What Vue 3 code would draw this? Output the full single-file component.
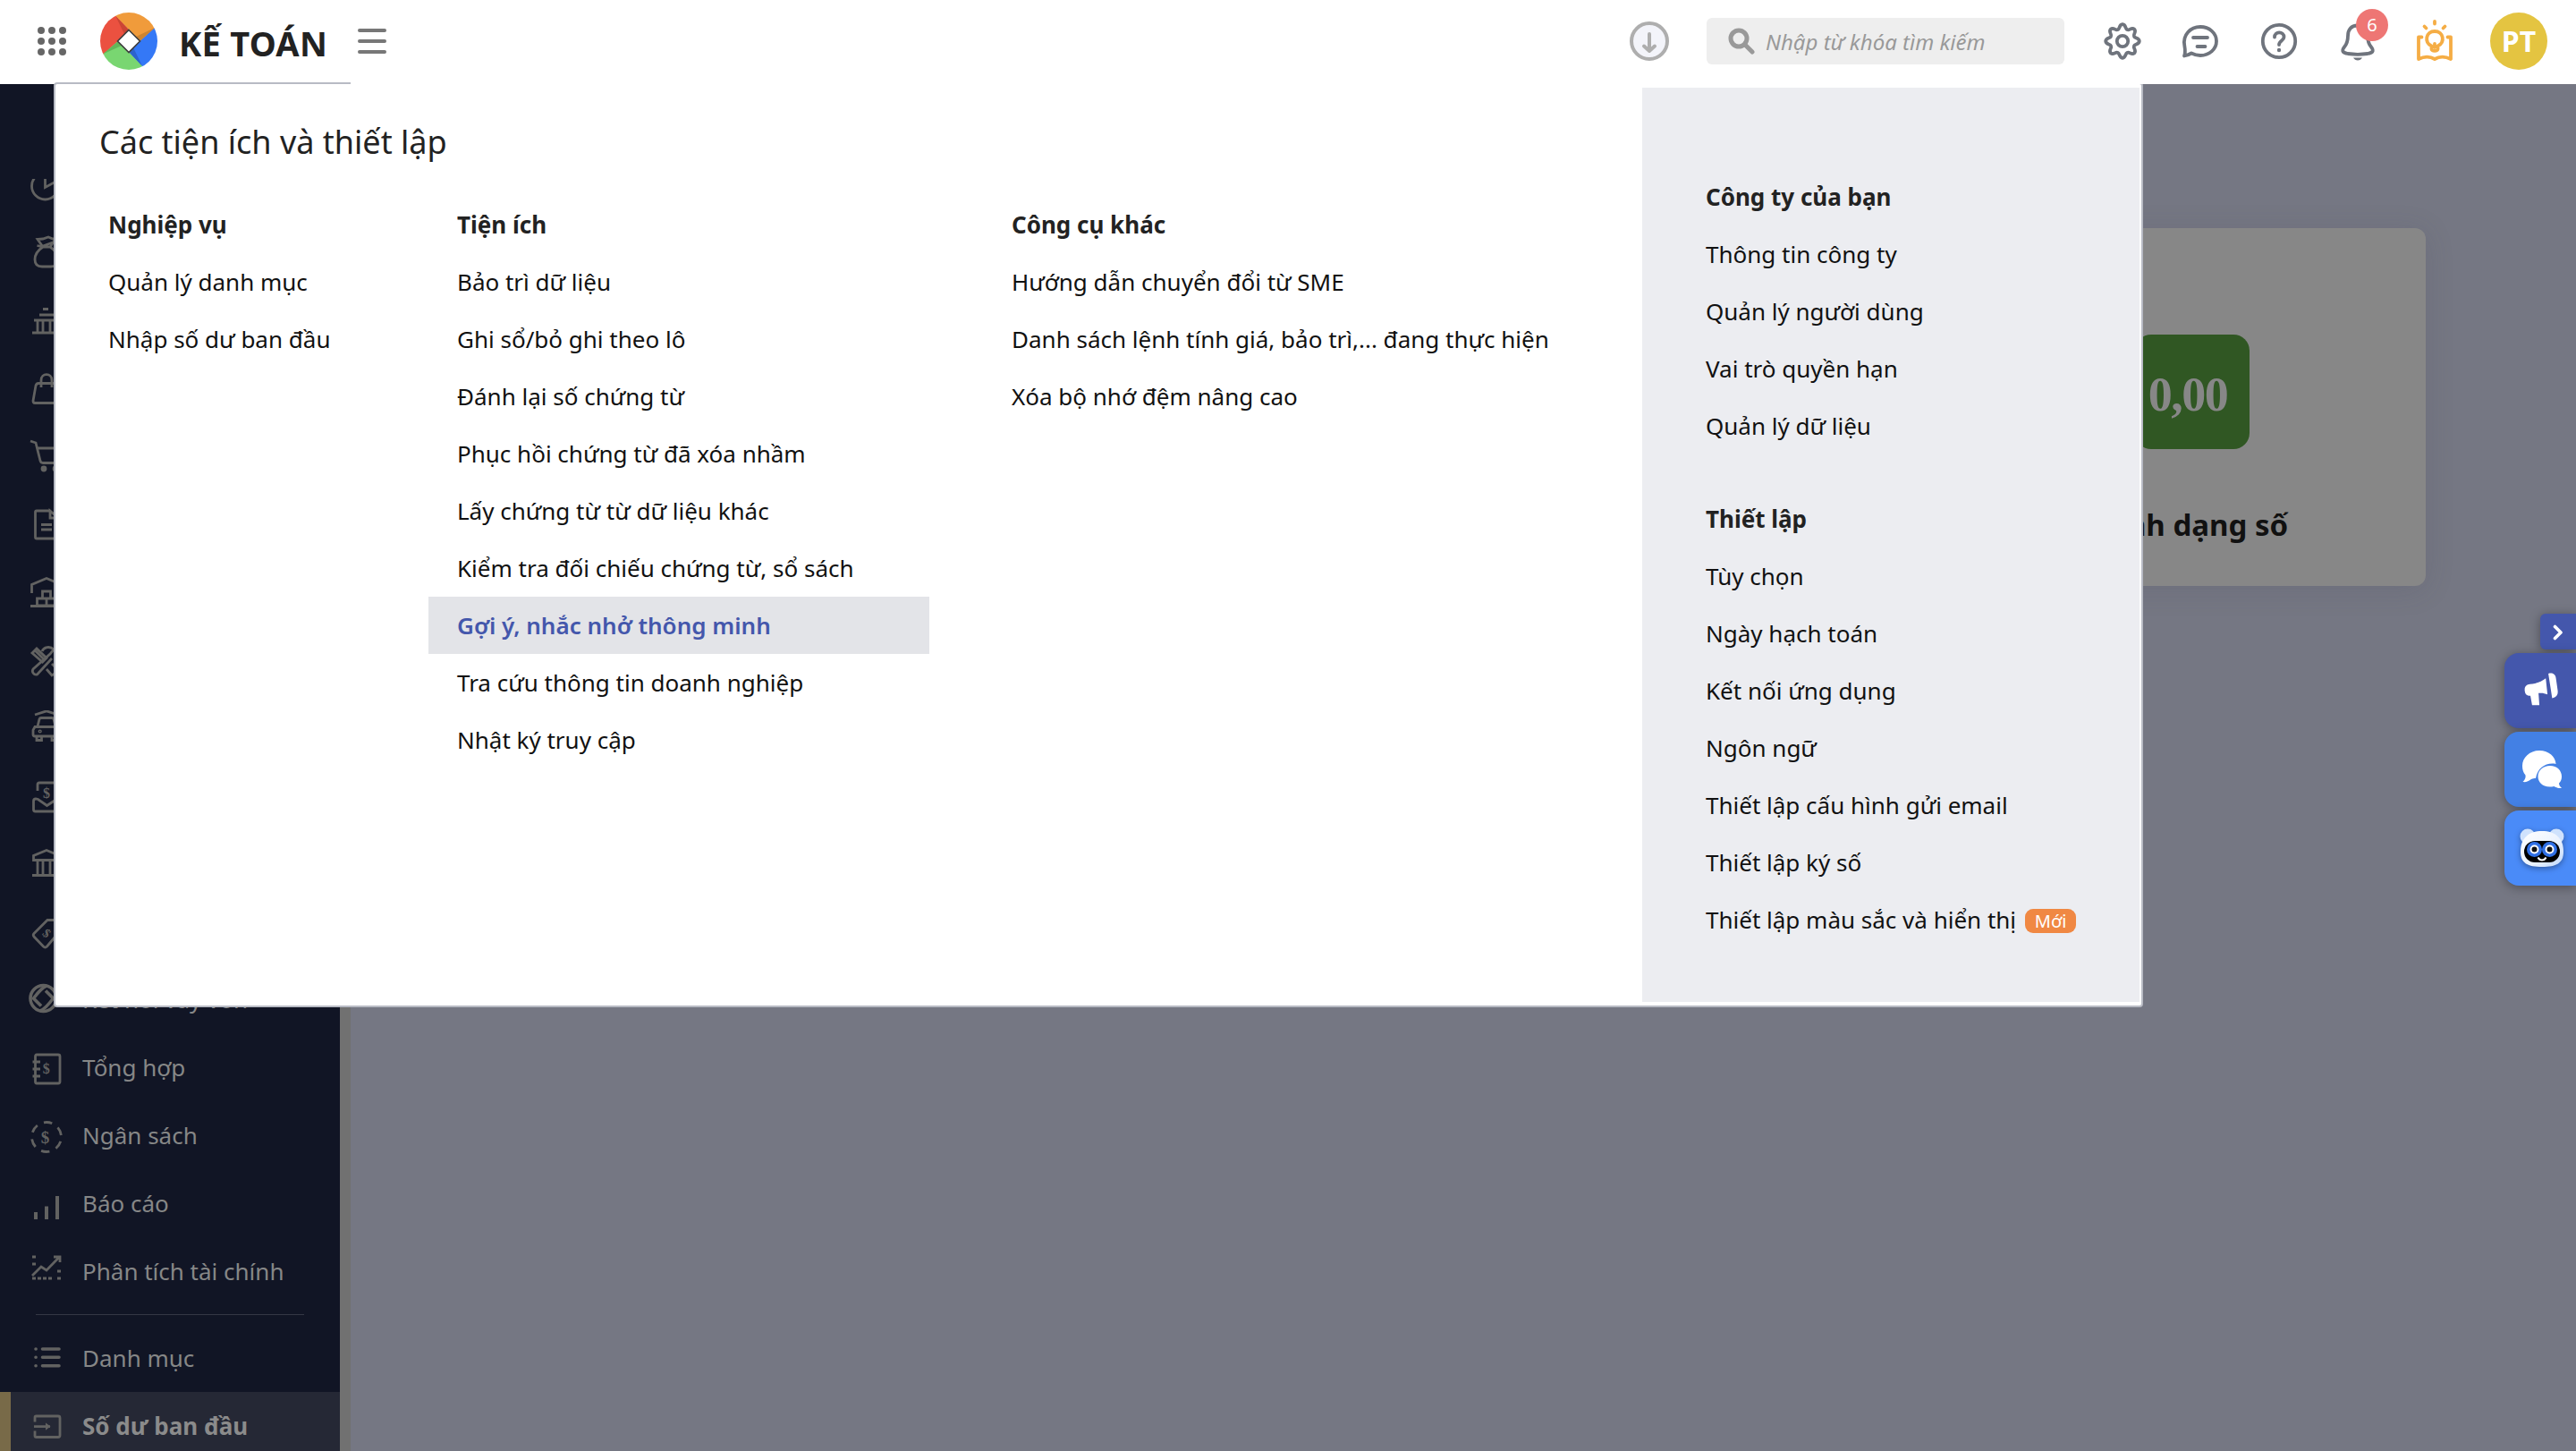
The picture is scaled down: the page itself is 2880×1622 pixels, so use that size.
<template>
  <div class="app">
    <header class="header">
      <div class="brand">
        <svg class="apps" viewBox="0 0 32 32">
          <circle v-for="n in 9" :key="n" :cx="4 + ((n - 1) % 3) * 12" :cy="4 + Math.floor((n - 1) / 3) * 12" r="4" />
        </svg>
        <svg class="logo" viewBox="0 0 64 64">
          <clipPath id="logo-clip"><circle cx="32" cy="32" r="32" /></clipPath>
          <g clip-path="url(#logo-clip)">
            <path fill="#eb5140" d="M-4 -4H10L32 19L20 32L-4 54Z" />
            <path fill="#f09b3b" d="M10 -5H70V10L44 32L32 19L13.500 0Z" />
            <path fill="#3478f6" d="M70 9L44 32L32 44L53 67H70Z" />
            <path fill="#79d671" d="M-4 53L20 32L32 44L54 67H-4Z" />
            <path fill="#cb4534" d="M17 3.500L32 19L27 24Z" />
            <path fill="#cd8430" d="M61 17L44.500 32L40 27Z" />
            <path fill="#2b63cc" d="M47 60L32 44L37 39Z" />
            <path fill="#62b65a" d="M3 46.500L20 32L24 37Z" />
          </g>
          <path fill="#fff" stroke="#3c3c3c" stroke-width="1.600" d="M32 19.500L44.500 32L32 44.500L19.500 32Z" />
        </svg>
        <span class="brand-name">KẾ TOÁN</span>
      </div>
      <div class="header-main">
        <svg class="burger" viewBox="0 0 32 28">
          <path d="M2 2H30M2 14H30M2 26H30" />
        </svg>
        <div class="tools">
          <svg class="download" viewBox="0 0 44 44">
            <circle cx="22" cy="22" r="20" />
            <path d="M22 14V33M16 27.500L22 33L28 27.500" />
          </svg>
          <div class="search">
            <svg class="search-icon" viewBox="0 0 30 30">
              <circle cx="12" cy="12" r="9" />
              <path d="M19 19L27 27" />
            </svg>
            <span class="placeholder">Nhập từ khóa tìm kiếm</span>
          </div>
          <svg class="tool gear" viewBox="0 0 44 44">
            <path :d="gearPath" />
            <circle cx="22" cy="22" r="6.200" />
          </svg>
          <svg class="tool" viewBox="0 0 44 44">
            <path d="M4 38.500C5.500 35 5 31 4.300 27C2 15 11 6 22 6C32 6 40 13 40 22C40 31 32 38 22 38C18 38 15 37 12 35.500C9.500 37 7 38 4 38.500Z" />
            <path d="M14 18H30M18.500 28H27.500" />
          </svg>
          <svg class="tool" viewBox="0 0 44 44">
            <circle cx="22" cy="22" r="18.200" />
            <path d="M17 17.500C17 10.500 27.500 11 27.500 17.500C27.500 21.500 22 21.500 22 26" />
            <circle class="solid" cx="22" cy="32" r="2.200" />
          </svg>
          <div class="bell">
            <svg class="tool" viewBox="0 0 44 44">
              <path d="M22 4.500C14 4.500 11 10 11 16C11 22 10 25 7 28.500C3 33.500 6 35 11 36C18 37 26 37 33 36C38 35 41 33.500 37 28.500C34 25 33 22 33 16C33 10 30 4.500 22 4.500Z" />
              <path class="solid" d="M17 40.500H27C25 44.500 19 44.500 17 40.500Z" />
            </svg>
            <span class="count">6</span>
          </div>
          <svg class="tool guide" viewBox="0 0 44 48">
            <path d="M7.500 19.500H4V44C10 41 17 41 22 44C27 41 34 41 40 44V19.500H36.500" />
            <path d="M18.500 33V29.500C10 25 12 13 22 13C32 13 34 25 25.500 29.500V33C25 35.500 19 35.500 18.500 33ZM22 27V31" />
            <path d="M22 2V4.500M10.500 7.500L12.500 9.500M33.500 7.500L31.500 9.500" />
          </svg>
          <div class="avatar">PT</div>
        </div>
      </div>
    </header>

    <div class="body">
      <aside class="sidebar">
        <ul class="nav">
          <li v-for="(item, i) in navItems" :key="i" class="nav-item">
            <svg class="nav-icon" viewBox="0 0 40 40" v-html="item.icon"></svg>
            <span class="nav-label">{{ item.label }}</span>
          </li>
          <li class="divider"></li>
          <li
            v-for="item in footItems"
            :key="item.label"
            :class="['nav-item', { active: item.active }]"
          >
            <svg class="nav-icon" viewBox="0 0 40 40" v-html="item.icon"></svg>
            <span>{{ item.label }}</span>
          </li>
        </ul>
      </aside>
      <main class="content">
        <div class="card">
          <div class="tile">0,00</div>
          <div class="card-title">Định dạng số</div>
        </div>
      </main>
    </div>

    <section class="panel">
      <div class="panel-main">
        <h2 class="panel-title">Các tiện ích và thiết lập</h2>
        <div class="columns">
          <ul v-for="group in groups" :key="group.title" :class="['menu', group.name]">
            <li class="menu-title">{{ group.title }}</li>
            <li
              v-for="item in group.items"
              :key="item"
              :class="['menu-item', { selected: item === selected }]"
              @click="selected = item"
            >
              {{ item }}
            </li>
          </ul>
        </div>
      </div>
      <div class="panel-side">
        <ul v-for="group in sideGroups" :key="group.title" class="menu">
          <li class="menu-title">{{ group.title }}</li>
          <li v-for="item in group.items" :key="item" class="menu-item" @click="selected = item">
            {{ item }}<span v-if="item === newItem" class="new">Mới</span>
          </li>
        </ul>
      </div>
    </section>

    <div class="floats">
      <button class="float-toggle">
        <svg viewBox="0 0 12 18"><path d="M2.500 2.500L9 9L2.500 15.500" /></svg>
      </button>
      <button class="float-btn news">
        <svg viewBox="0 0 44 44">
          <path d="M4 23C3 17 6 15 10 14.500C17 14 24 11 28.500 7.500L30.500 26.500C27 25 24 24.500 20 25L21 39H12.500L10.500 28C6 28 4.500 26 4 23Z" />
          <path d="M31.500 2C37 .5 40 3 40.500 8L42.500 22C43 27 41 30 36 31Z" />
        </svg>
      </button>
      <button class="float-btn chat">
        <svg viewBox="0 0 44 44">
          <path d="M20 1C31 1 38 8 38.500 16C28 14 18 20 16 32C14 32 13 32 11 33C8 35.500 5 36.500 1.500 36C4 33.500 5 31 4.500 28.500C2 25.500 1 22 1 18C1 9 9 1 20 1Z" />
          <path d="M32 18C40 18 45 23.500 45 30C45 33 44 35.500 42 37.500C42 40 43.500 41.500 45 43C41 43.500 38 42 36.500 41C25 43.500 18.500 37 18.500 30C18.500 23 24 18 32 18Z" />
        </svg>
      </button>
      <button class="float-btn bot">
        <svg viewBox="0 0 50 44">
          <defs>
            <linearGradient id="fur" x1="0" y1="0" x2="1" y2="1">
              <stop offset="0" stop-color="#fff" />
              <stop offset=".6" stop-color="#eaf2fe" />
              <stop offset="1" stop-color="#bcd6fb" />
            </linearGradient>
          </defs>
          <circle cx="9" cy="9" r="8.500" fill="#cfe2fd" />
          <circle cx="41" cy="9" r="8.500" fill="#cfe2fd" />
          <path fill="url(#fur)" d="M25 3C40 3 49 11 49 26C49 39 41 43 25 43C9 43 1 39 1 26C1 11 10 3 25 3Z" />
          <rect x="5" y="14" width="40" height="24" rx="12" fill="#000" />
          <circle cx="16.500" cy="23.500" r="8.500" fill="#2f6fe4" />
          <circle cx="33.500" cy="23.500" r="8.500" fill="#2f6fe4" />
          <circle cx="16.500" cy="23.500" r="4" fill="#111" stroke="#fff" stroke-width="2" />
          <circle cx="33.500" cy="23.500" r="4" fill="#111" stroke="#fff" stroke-width="2" />
          <path d="M20.500 32.500C22.500 36.500 27.500 36.500 29.500 32.500" fill="none" stroke="#fff" stroke-width="2" />
        </svg>
      </button>
    </div>
  </div>
</template>

<script setup>
import { ref } from "vue";

const selected = ref("Gợi ý, nhắc nhở thông minh");
const newItem = "Thiết lập màu sắc và hiển thị";

const groups = [
  {
    name: "tasks",
    title: "Nghiệp vụ",
    items: ["Quản lý danh mục", "Nhập số dư ban đầu"],
  },
  {
    name: "utilities",
    title: "Tiện ích",
    items: [
      "Bảo trì dữ liệu",
      "Ghi sổ/bỏ ghi theo lô",
      "Đánh lại số chứng từ",
      "Phục hồi chứng từ đã xóa nhầm",
      "Lấy chứng từ từ dữ liệu khác",
      "Kiểm tra đối chiếu chứng từ, sổ sách",
      "Gợi ý, nhắc nhở thông minh",
      "Tra cứu thông tin doanh nghiệp",
      "Nhật ký truy cập",
    ],
  },
  {
    name: "others",
    title: "Công cụ khác",
    items: [
      "Hướng dẫn chuyển đổi từ SME",
      "Danh sách lệnh tính giá, bảo trì,... đang thực hiện",
      "Xóa bộ nhớ đệm nâng cao",
    ],
  },
];

const sideGroups = [
  {
    title: "Công ty của bạn",
    items: ["Thông tin công ty", "Quản lý người dùng", "Vai trò quyền hạn", "Quản lý dữ liệu"],
  },
  {
    title: "Thiết lập",
    items: [
      "Tùy chọn",
      "Ngày hạch toán",
      "Kết nối ứng dụng",
      "Ngôn ngữ",
      "Thiết lập cấu hình gửi email",
      "Thiết lập ký số",
      newItem,
    ],
  },
];

const dollar = (x, y, size = 16, extra = "") =>
  `<text x="${x}" y="${y}" font-family="Liberation Serif, serif" font-weight="bold" font-size="${size}" text-anchor="middle" fill="currentColor" stroke="none" ${extra}>$</text>`;

const navItems = [
  { icon: '<circle cx="18.500" cy="22" r="15"/><path d="M18.500 8V23.500L34 15"/>' },
  {
    icon: '<path d="M16 14C10 18 7 23 7 28C7 34 10 36 15 36H25C30 36 33 34 33 28C33 23 30 18 24 14ZM16 14L10 5.500L16 5L22 3L27 5L31 4L24 14M9.500 12.500L16 14M16 13L27 9"/>',
  },
  { icon: '<path d="M16 7.500H22M12 14H28M6 20H34M10 20V34M16 20V34M24 20V34M30 20V34M4 34H36"/>' },
  {
    icon: '<path d="M11 14.500H29C31 14.500 31.500 15.500 32 17L35 34C35 36 34 36.500 33 36.500H7C5.500 36.500 5 35.500 5 34L8 17C8.500 15.500 9 14.500 11 14.500ZM14 19V11C14 2.500 26 2.500 26 11V19"/>',
  },
  {
    icon: '<path d="M2 3L8 5L13 25C13.500 27 14 27.500 16 27.500H33L37 11H10"/><circle cx="17" cy="34" r="2" fill="currentColor"/><circle cx="30" cy="34" r="2" fill="currentColor"/>',
  },
  { icon: '<path d="M24 5H9Q7.500 5 7.500 6.500V34.500Q7.500 36 9 36H31Q33 36 33 34V13L24 5V13H33M14 20.500H26M14 26H26"/>' },
  {
    icon: '<path d="M3.500 21V11.500L20 4.500L36.500 11.500V21M2 35.500H38M15.500 19H24.500V27H15.500ZM9.500 27H20V35H9.500ZM20 27H30V35H20Z"/>',
  },
  {
    icon: '<path d="M4 12L9 7L20 17.500L15.500 22ZM15 10C17 5 24 4 28 8L24 13L5 30C3 33 6 37 9.500 36L26 18M7.500 9.500L17 19M20 30L26 37L34 32L26 24"/>',
  },
  {
    icon: '<path d="M7 5L20 .8L33 5M10 18L12 10Q12.500 8.500 14 8.500H26Q27.500 8.500 28 10L30 18M7 18.500H33L35.500 22V27Q35.500 29 34 29H7Q5 29 5 27V22ZM9 29V33.500H14.500V29M26 29V33.500H31.500V29"/><circle cx="12.700" cy="23.500" r=".7"/>',
  },
  {
    icon: '<path d="M10 14V7Q10 5 12 5H28Q30 5 30 7V14M8 23Q5.500 23 5.500 25.500V35Q5.500 37 7.500 37H33Q35 37 35 35V25.500Q35 23 32 23L20.500 30.500L10.500 23.500Z"/>' + dollar(20, 22),
  },
  { icon: '<path d="M5.500 15.500V10.500L20 4.500L34.500 10.500V15.500ZM10 16V32M16 16V32M24 16V32M30 16V32M4 32.500H36"/>' },
  {
    icon: '<path d="M21 6.500H32Q34 6.500 34 8.500V20L20.500 36Q18.500 38 16.500 36L6 25Q4.500 23 6 21.500Z"/>' + dollar(20.5, 26, 14, 'transform="rotate(40 20.500 21)"'),
  },
  {
    label: "Kết nối vay vốn",
    icon: '<g stroke-width="3.600"><circle cx="16.500" cy="18" r="14.500"/><path d="M20 4C15 6 10 12 5.500 18L14 26.500M13 32C18 30 23 24 27.500 18L19 9.500"/></g>',
  },
  {
    label: "Tổng hợp",
    icon: '<path d="M9 5H33Q35 5 35 7V35Q35 37 33 37H9Q7.500 37 7.500 35V7Q7.500 5 9 5ZM4.500 13H13M4.500 21H13M4.500 29H13"/>' + dollar(19.8, 25.5),
  },
  {
    label: "Ngân sách",
    icon: '<circle cx="20" cy="21" r="16.500" stroke-dasharray="9.500 7.780" stroke-dashoffset="-5"/>' + dollar(18.6, 28, 19),
  },
  { label: "Báo cáo", icon: '<path stroke-width="4" d="M8 37V29M20 37V22.500M32 37V11"/>' },
  {
    label: "Phân tích tài chính",
    icon: '<path d="M4 24L14 14L20 18L34 3.500M28 3H35V9M4 3H8M4 11H8M32 19H36M32 27H36"/><path d="M4 27H26" stroke-dasharray="4 2"/>',
  },
];

const footItems = [
  {
    label: "Danh mục",
    icon: '<path stroke-width="3.600" stroke-linecap="round" d="M15.500 10H34M15.500 19.300H34M15.500 28.700H34M8 10H8.100M8 19.300H8.100M8 28.700H8.100"/>',
  },
  {
    label: "Số dư ban đầu",
    active: true,
    icon: '<path d="M7 15.500V10.500Q7 9 8.500 9H33Q35 9 35 11V30.500Q35 32.500 33 32.500H8.500Q7 32.500 7 31V25.500M6 20.600H24"/><path d="M19 16.500L24.500 20.600L19 24.700Z" fill="currentColor" stroke-width="0"/>',
  },
];

// Eight soft teeth around the centre of a 44px box
const gearPoint = (deg, r) => {
  const a = (deg * Math.PI) / 180;
  return `${(22 + r * Math.cos(a)).toFixed(1)} ${(22 + r * Math.sin(a)).toFixed(1)}`;
};
let gearPath = `M${gearPoint(-22.5, 14)}`;
for (let deg = 0; deg < 360; deg += 45) {
  gearPath += `C${gearPoint(deg - 11, 14)} ${gearPoint(deg - 13, 18.8)} ${gearPoint(deg, 18.8)}`;
  gearPath += `C${gearPoint(deg + 13, 18.8)} ${gearPoint(deg + 11, 14)} ${gearPoint(deg + 22.5, 14)}`;
}
gearPath += "Z";
</script>

<style>
body {
  margin: 0;
  overflow: hidden;
}
</style>

<style scoped>
.app {
  position: relative;
  display: flex;
  flex-direction: column;
  height: 1622px;
  overflow: hidden;
  background: #757783;
  color: #111;
  font-family: "Noto Sans", sans-serif;
  font-size: 26px;
}

ul {
  list-style: none;
  margin: 0;
  padding: 0;
}

svg {
  display: block;
  flex: none;
}

.header {
  display: flex;
  height: 94px;
  flex: none;
  background: #fff;
}

.brand {
  display: flex;
  align-items: center;
  box-sizing: border-box;
  width: 392px;
  height: 92px;
  padding-left: 42px;
}

.apps {
  width: 32px;
  height: 32px;
  fill: #666;
}

.logo {
  width: 64px;
  height: 64px;
  margin-left: 38px;
}

.brand-name {
  margin-left: 24px;
  padding-top: 4px;
  color: #222;
  font-size: 38px;
  font-weight: 700;
  letter-spacing: 0.3px;
  line-height: 50px;
  white-space: nowrap;
}

.header-main {
  position: relative;
  z-index: 2;
  display: flex;
  flex: 1;
  align-items: center;
  justify-content: space-between;
  height: 92px;
  padding: 0 32px 0 8px;
  background: #fff;
  border-bottom: 2px solid #fff;
}

.burger {
  width: 32px;
  height: 28px;
  fill: none;
  stroke: #777;
  stroke-width: 4;
  stroke-linecap: round;
}

.tools {
  display: flex;
  align-items: center;
}

.download {
  width: 44px;
  height: 44px;
  fill: #f3f4fa;
  stroke: #aeaeae;
  stroke-width: 4;
  stroke-linecap: round;
  stroke-linejoin: round;
}

.download path {
  fill: none;
}

.search {
  display: flex;
  align-items: center;
  box-sizing: border-box;
  width: 400px;
  height: 52px;
  margin: 0 43px 0 42px;
  padding-left: 24px;
  border-radius: 6px;
  background: #eee;
}

.search-icon {
  width: 30px;
  height: 30px;
  fill: none;
  stroke: #999;
  stroke-width: 5;
  stroke-linecap: round;
}

.placeholder {
  margin-left: 12px;
  color: #999;
  font-size: 24px;
  font-style: italic;
  white-space: nowrap;
}

.tool {
  width: 44px;
  height: 44px;
  margin-right: 44px;
  fill: none;
  stroke: #6f747d;
  stroke-width: 3.8;
  stroke-linecap: round;
  stroke-linejoin: round;
}

.gear {
  margin-right: 43px;
}

.tool .solid {
  fill: #6f747d;
  stroke: none;
}

.bell {
  position: relative;
}

.count {
  position: absolute;
  top: -14px;
  left: 20px;
  width: 36px;
  height: 36px;
  border-radius: 50%;
  background: #ee7674;
  color: #fff;
  font-size: 20px;
  line-height: 36px;
  text-align: center;
}

.guide {
  height: 48px;
  margin-right: 40px;
  margin-left: -2px;
  stroke: #f5ad45;
}

.avatar {
  width: 64px;
  height: 64px;
  border-radius: 50%;
  background: #e4c441;
  color: #fff;
  font-size: 32px;
  font-weight: 700;
  line-height: 64px;
  text-align: center;
}

.body {
  display: flex;
  flex: 1;
  min-height: 0;
}

.sidebar {
  box-sizing: border-box;
  width: 392px;
  padding-top: 106px;
  border-right: 12px solid #717171;
  background: #111525;
  overflow: hidden;
}

.nav {
  height: 1422px;
  overflow: hidden;
}

.nav-item {
  display: flex;
  align-items: center;
  gap: 20px;
  box-sizing: border-box;
  height: 76px;
  padding-left: 32px;
  color: #868787;
  white-space: nowrap;
}

/* the list is scrolled, so the first row is cut by the top edge */
.nav-item:first-child {
  margin-top: -32px;
}

.nav-label {
  padding-bottom: 3px;
}

.nav-item.active {
  padding-left: 20px;
  border-left: 12px solid #786a48;
  background: #252835;
  color: #8b8b8b;
  font-weight: 700;
}

.nav-icon {
  width: 40px;
  height: 40px;
  color: #626261;
  fill: none;
  stroke: currentColor;
  stroke-width: 2.8;
}

.divider {
  height: 1px;
  margin: 9px 40px 10px;
  background: #343745;
}

.content {
  flex: 1;
  display: flex;
  align-items: flex-start;
  justify-content: flex-end;
  padding: 161px 168px 0 0;
}

.card {
  display: flex;
  flex-direction: column;
  align-items: center;
  gap: 63px;
  box-sizing: border-box;
  width: 522px;
  height: 400px;
  padding-top: 119px;
  border-radius: 12px;
  background: #878787;
  box-shadow: 0 4px 32px rgba(60, 62, 80, 0.15);
}

.tile {
  box-sizing: border-box;
  width: 128px;
  height: 128px;
  padding-right: 10px;
  border-radius: 18px;
  background: #305723;
  color: #878787;
  font-family: "Liberation Serif", serif;
  font-size: 54px;
  font-weight: 700;
  letter-spacing: -1.5px;
  line-height: 134px;
  text-align: center;
}

.card-title {
  font-size: 33px;
  font-weight: 700;
  line-height: 44px;
}

.panel {
  position: absolute;
  z-index: 1;
  top: 92px;
  left: 60px;
  display: flex;
  box-sizing: border-box;
  width: 2336px;
  height: 1034px;
  padding: 4px 2px 4px 0;
  border: 2px solid #b8bbc4;
  border-radius: 4px;
  background: #fff;
}

.panel-main {
  flex: 1;
  padding: 36px 0 0 49px;
}

.panel-title {
  margin: 0;
  color: #222;
  font-size: 36px;
  font-weight: 400;
  line-height: 50px;
}

.columns {
  display: flex;
  padding-top: 35px;
}

.menu-title,
.menu-item {
  height: 64px;
  line-height: 64px;
  white-space: nowrap;
}

.menu-title {
  color: #222;
  font-weight: 700;
}

.menu-item {
  cursor: pointer;
}

.columns .menu-title,
.columns .menu-item {
  padding-left: 32px;
}

.tasks {
  width: 390px;
  margin-left: -22px;
}

.utilities {
  width: 560px;
}

.others {
  margin-left: 60px;
}

.menu-item.selected {
  background: #e3e4e8;
  color: #4457ac;
  font-weight: 600;
}

.panel-side {
  display: flex;
  flex-direction: column;
  gap: 40px;
  box-sizing: border-box;
  width: 556px;
  padding: 90px 0 0 71px;
  background: #ecedf1;
}

.new {
  display: inline-block;
  width: 57px;
  height: 27px;
  margin-left: 10px;
  border-radius: 9px;
  background: #f08843;
  color: #fff;
  font-size: 20px;
  line-height: 27px;
  text-align: center;
  vertical-align: 1px;
}

.floats {
  position: absolute;
  z-index: 3;
  top: 686px;
  right: 0;
  display: flex;
  flex-direction: column;
  align-items: flex-end;
  gap: 4px;
}

.floats button {
  display: flex;
  align-items: center;
  justify-content: center;
  border: 0;
  padding: 0;
  box-shadow: 0 2px 12px rgba(0, 0, 0, 0.35);
}

.float-toggle {
  width: 40px;
  height: 40px;
  border-radius: 6px 0 0 6px;
  background: #4457ac;
}

.float-toggle svg {
  width: 12px;
  height: 18px;
  margin-top: 2px;
  fill: none;
  stroke: #fff;
  stroke-width: 3.6;
  stroke-linecap: round;
  stroke-linejoin: round;
}

.float-btn {
  width: 80px;
  height: 84px;
  border-radius: 16px 0 0 16px;
}

.float-btn svg {
  width: 44px;
  height: 44px;
  margin-left: 2px;
  fill: #fff;
  overflow: visible;
}

.float-btn.news svg {
  width: 42px;
  height: 42px;
  margin-left: 0;
}

.float-btn.bot svg {
  width: 50px;
  margin-left: 4px;
  filter: drop-shadow(0 2px 3px rgba(0, 0, 0, 0.35));
}

.news {
  background: #4457ac;
}

.chat {
  background: #4380e4;
}

.bot {
  background: #4a8bf8;
}
</style>
